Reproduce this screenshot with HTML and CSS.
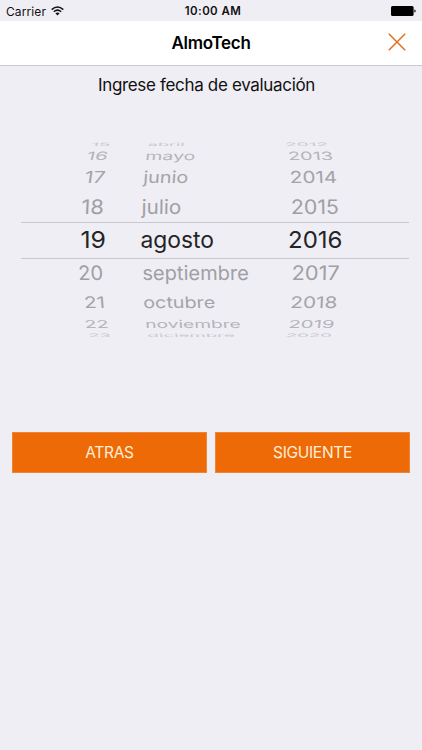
FILE: index.html
```html
<!DOCTYPE html>
<html lang="es">
<head>
<meta charset="utf-8">
<title>AlmoTech</title>
<link rel="stylesheet" href="styles.css">
</head>
<body>
<div class="status">
  <div class="carrier"><span>Carrier</span>
    <svg class="wifi" width="13" height="10" viewBox="0 0 13 10"><g fill="none" stroke="#111" stroke-width="1.5"><path d="M.7 3.6Q6.5-1.6 12.3 3.6"/><path d="M2.8 5.8Q6.5 2.5 10.2 5.8"/></g><path d="M4.4 7.2Q6.5 5.6 8.6 7.2L6.5 9.5Z" fill="#111"/></svg>
  </div>
  <span class="clock">10:00 AM</span>
  <svg class="battery" width="25" height="10" viewBox="0 0 25 10"><rect width="22.6" height="10" rx="1.6"/><path d="M23.4 3.4Q24.7 3.8 24.7 5T23.4 6.6Z"/></svg>
</div>
<header class="navbar">
  <h1>AlmoTech</h1>
  <button class="close" aria-label="Cerrar"><svg width="18" height="18" viewBox="0 0 18 18"><path d="M.8.8 17.2 17.2M17.2.8.8 17.2" stroke="#e3701f" stroke-width="1.5"/></svg></button>
</header>
<main>
  <p class="prompt"><span>Ingrese fecha de evaluación</span></p>
  <div class="picker">
    <svg class="row r4" height="8"><g font-size="4.6"><text transform="translate(91 5.5) skewX(-18)" textLength="19" lengthAdjust="spacingAndGlyphs">15</text><text transform="translate(147.5 5.5) skewX(-8)" textLength="37" lengthAdjust="spacingAndGlyphs">abril</text><text transform="translate(285.5 5.5) skewX(12)" textLength="43" lengthAdjust="spacingAndGlyphs">2012</text></g></svg>
    <svg class="row r3" height="15"><g font-size="11.5"><text transform="translate(86 11.5) skewX(-14)" textLength="21" lengthAdjust="spacingAndGlyphs">16</text><text transform="translate(145 11.5) skewX(-6)" textLength="50" lengthAdjust="spacingAndGlyphs">mayo</text><text transform="translate(288.5 11.5) skewX(7)" textLength="45" lengthAdjust="spacingAndGlyphs">2013</text></g></svg>
    <svg class="row r2" height="28"><g font-size="16.5"><text transform="translate(84 20) skewX(-8)" textLength="20.5" lengthAdjust="spacingAndGlyphs">17</text><text transform="translate(143 20) skewX(-4)" textLength="45" lengthAdjust="spacingAndGlyphs">junio</text><text transform="translate(290 20) skewX(3)" textLength="47.5" lengthAdjust="spacingAndGlyphs">2014</text></g></svg>
    <svg class="row r1" height="31"><g font-size="20"><text transform="translate(81 22.5) skewX(-3)" textLength="22.5" lengthAdjust="spacingAndGlyphs">18</text><text transform="translate(141.5 22.5) skewX(-1)" textLength="39.5" lengthAdjust="spacingAndGlyphs">julio</text><text transform="translate(291 22.5) skewX(1)" textLength="48" lengthAdjust="spacingAndGlyphs">2015</text></g></svg>
    <svg class="row current" height="37"><g font-size="23.5"><text x="80.5" y="26" textLength="25.5" lengthAdjust="spacingAndGlyphs">19</text><text x="140.5" y="26" textLength="73.5" lengthAdjust="spacingAndGlyphs">agosto</text><text x="288" y="26" textLength="54.5" lengthAdjust="spacingAndGlyphs">2016</text></g></svg>
    <svg class="row r1" height="29"><g font-size="20"><text transform="translate(78.5 21.3) skewX(3)" textLength="25" lengthAdjust="spacingAndGlyphs">20</text><text transform="translate(142.5 21.3) skewX(1)" textLength="106.5" lengthAdjust="spacingAndGlyphs">septiembre</text><text transform="translate(291.5 21.3) skewX(-1)" textLength="48" lengthAdjust="spacingAndGlyphs">2017</text></g></svg>
    <svg class="row r2" height="29"><g font-size="16"><text transform="translate(84.5 20) skewX(5)" textLength="21" lengthAdjust="spacingAndGlyphs">21</text><text transform="translate(143.5 20) skewX(3)" textLength="72" lengthAdjust="spacingAndGlyphs">octubre</text><text transform="translate(290 20) skewX(-3)" textLength="47" lengthAdjust="spacingAndGlyphs">2018</text></g></svg>
    <svg class="row r3" height="13"><g font-size="11"><text transform="translate(85 10.5) skewX(8)" textLength="24" lengthAdjust="spacingAndGlyphs">22</text><text transform="translate(145.5 10.5) skewX(4)" textLength="95.5" lengthAdjust="spacingAndGlyphs">noviembre</text><text transform="translate(288 10.5) skewX(-7)" textLength="46" lengthAdjust="spacingAndGlyphs">2019</text></g></svg>
    <svg class="row r4" height="10"><g font-size="4.6"><text transform="translate(89 7) skewX(14)" textLength="22" lengthAdjust="spacingAndGlyphs">23</text><text transform="translate(147.5 7) skewX(6)" textLength="87.5" lengthAdjust="spacingAndGlyphs">diciembre</text><text transform="translate(285.5 7) skewX(-12)" textLength="46" lengthAdjust="spacingAndGlyphs">2020</text></g></svg>
  </div>
  <div class="actions"><button><span>ATRAS</span></button><button><span>SIGUIENTE</span></button></div>
</main>
</body>
</html>
```
FILE: styles.css
```css
* { box-sizing: border-box; }
body { margin: 0; min-height: 750px; background: #efeef4; color: #111; font-family: Inter, sans-serif; }
svg { display: block; }
button { border: 0; padding: 0; font: inherit; }
.status { display: grid; grid-template-columns: 1fr auto 1fr; align-items: center; height: 21px; padding: 1px 6px 0; font-size: 12px; }
.carrier { display: flex; align-items: center; gap: 5px; letter-spacing: .1px; }
.clock { padding-left: 4px; font-weight: 600; font-size: 11.5px; letter-spacing: .4px; }
.battery { justify-self: end; }
.navbar { display: grid; grid-template-columns: 1fr auto 1fr; align-items: center; height: 45px; background: #fff; border-bottom: 1px solid #cbcace; }
.navbar h1 { grid-column: 2; margin: 0; font-size: 17px; font-weight: 600; letter-spacing: -.3px; color: #000; }
.close { justify-self: end; margin: 0 16px 3px 0; background: none; }
.prompt { height: 40px; margin: 0; padding-right: 9px; line-height: 39px; text-align: center; font-size: 17px; letter-spacing: -.33px; white-space: nowrap; }
.picker { display: flex; flex-direction: column; height: 326px; padding-top: 34px; }
.row { flex: none; width: 422px; overflow: visible; fill: #a09fa4; }
.r2 { fill: #a4a3a8; }
.r3 { fill: #b5b4b9; }
.r4 { fill: #c8c7cc; }
.current { width: 388px; margin-left: 21px; fill: #242427; border: solid #c9c8cd; border-width: 1px 0; }
.current g { transform: translate(-21px, -1px); }
.actions { display: flex; gap: 8px; padding: 0 12px; }
.actions button { flex: 1; height: 41px; background: #ed6a06; border: 1px solid #ee8435; color: #ffefd8; font-size: 15.5px; letter-spacing: -.3px; }
```
